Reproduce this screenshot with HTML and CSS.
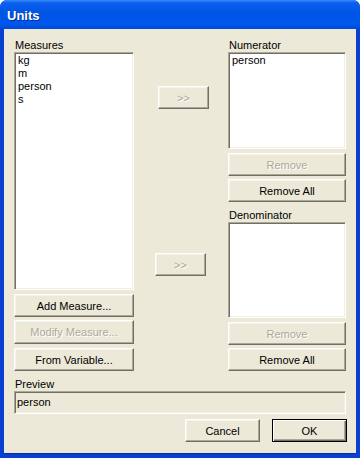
FILE: index.html
```html
<!DOCTYPE html>
<html lang="en">
<head>
    <meta charset="UTF-8">
    <meta name="viewport" content="width=device-width, initial-scale=1.0">
    <title>Units</title>
    <link rel="stylesheet" href="styles.css">
</head>
<body>

<div class="window">
    <div class="titlebar">
        <span class="title">Units</span>
    </div>
    <div class="client">
        <div class="columns">
            <div class="col">
                <div class="label">Measures</div>
                <ul class="listbox measures">
                    <li>kg</li>
                    <li>m</li>
                    <li>person</li>
                    <li>s</li>
                </ul>
                <button type="button" class="btn add">Add Measure...</button>
                <button type="button" class="btn modify" disabled>Modify Measure...</button>
                <button type="button" class="btn from">From Variable...</button>
            </div>

            <div class="col middle">
                <button type="button" class="btn arrow to-num" disabled>&gt;&gt;</button>
                <button type="button" class="btn arrow to-den" disabled>&gt;&gt;</button>
            </div>

            <div class="col">
                <div class="label">Numerator</div>
                <ul class="listbox numerator">
                    <li>person</li>
                </ul>
                <button type="button" class="btn remove" disabled>Remove</button>
                <button type="button" class="btn remove-all">Remove All</button>

                <div class="label denom-label">Denominator</div>
                <ul class="listbox denominator"></ul>
                <button type="button" class="btn remove" disabled>Remove</button>
                <button type="button" class="btn remove-all">Remove All</button>
            </div>
        </div>

        <div class="label preview-label">Preview</div>
        <div class="preview">person</div>

        <div class="actions">
            <button type="button" class="btn action">Cancel</button>
            <button type="button" class="btn action default">OK</button>
        </div>
    </div>
</div>

</body>
</html>
```

FILE: styles.css
```css
body {
    margin: 0;
    background-color: #fff;
    font-family: "Liberation Sans", Arial, sans-serif;
    font-size: 11px;
    color: #000;
}
.window {
    width: 360px;
    height: 458px;
    box-sizing: border-box;
    display: flex;
    flex-direction: column;
    background-color: #0841d2;
    border-radius: 7px 7px 0 0;
    overflow: hidden;
}
.titlebar {
    height: 29px;
    flex: none;
    display: flex;
    align-items: center;
    padding-left: 7px;
    background: linear-gradient(to bottom, #3b8cf5 0%, #0a5ff0 10%, #0055e5 45%, #0058ee 80%, #0048d8 100%);
}
.title {
    color: #fff;
    font-weight: bold;
    font-size: 13px;
    text-shadow: 1px 1px #0a2a8c;
    margin-top: 2px;
}
.client {
    flex: 1;
    margin: 0 4px 4px 4px;
    padding: 10px 9px 0 10px;
    background-color: #ece9d8;
    border-bottom: 1px solid #0a2aa0;
}
.columns {
    display: grid;
    grid-template-columns: 120px 94px 118px;
}
.col {
    display: flex;
    flex-direction: column;
}
.label {
    height: 13px;
    line-height: 13px;
    padding-left: 1px;
}
.listbox {
    list-style: none;
    margin: 0;
    padding: 1px 2px 0 2px;
    box-sizing: border-box;
    background-color: #fff;
    border-top: 1px solid #aca899;
    border-left: 1px solid #aca899;
    border-right: 1px solid #fff;
    border-bottom: 1px solid #fff;
    box-shadow: inset 1px 1px 0 #716f64, inset -1px -1px 0 #f1efe2;
}
.listbox li {
    height: 13px;
    line-height: 13px;
    padding-left: 1px;
}
.measures {
    height: 238px;
}
.numerator {
    height: 97px;
}
.denominator {
    height: 96px;
}
.btn {
    height: 23px;
    padding: 0;
    box-sizing: border-box;
    font-family: inherit;
    font-size: 11px;
    color: #000;
    background-color: #ece9d8;
    border-top: 1px solid #fff;
    border-left: 1px solid #fff;
    border-right: 1px solid #716f64;
    border-bottom: 1px solid #716f64;
    box-shadow: inset -1px -1px 0 #aca899, inset 1px 1px 0 #f5f4ea;
    border-radius: 0;
    cursor: default;
}
.btn:disabled {
    color: #aca899;
    text-shadow: 1px 1px 0 #fff;
}
.add {
    margin-top: 4px;
}
.modify {
    margin-top: 3px;
    height: 24px;
}
.from {
    margin-top: 4px;
}
.remove {
    margin-top: 4px;
}
.remove-all {
    margin-top: 3px;
}
.denom-label {
    margin-top: 7px;
}
.arrow {
    width: 51px;
}
.to-num {
    margin-top: 47px;
    margin-left: 24px;
}
.to-den {
    margin-top: 144px;
    margin-left: 21px;
}
.preview-label {
    margin-top: 7px;
}
.preview {
    height: 23px;
    box-sizing: border-box;
    margin-right: 1px;
    padding-left: 2px;
    line-height: 20px;
    border-top: 1px solid #aca899;
    border-left: 1px solid #aca899;
    border-right: 1px solid #fff;
    border-bottom: 1px solid #fff;
    box-shadow: inset 1px 1px 0 #716f64, inset -1px -1px 0 #f1efe2;
}
.actions {
    display: flex;
    justify-content: flex-end;
    gap: 12px;
    margin-top: 5px;
}
.action {
    width: 75px;
}
.default {
    border: 1px solid #000;
    box-shadow: inset 1px 1px 0 #fff, inset -1px -1px 0 #716f64, inset -2px -2px 0 #aca899;
}
```
